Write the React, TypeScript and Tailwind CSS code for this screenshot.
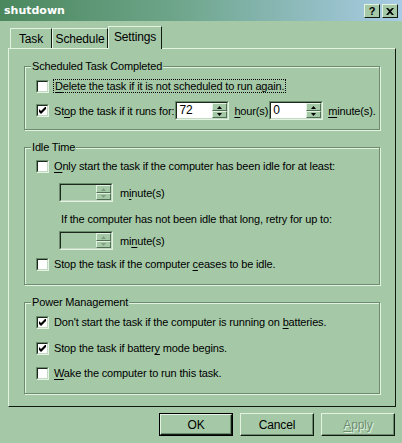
import React from 'react';

const HI = 'border-t-[#e2f3e2] border-l-[#e2f3e2]';

function U({ children }: { children: React.ReactNode }) {
  return <span className="underline underline-offset-[2px] decoration-[1px]">{children}</span>;
}

function Check({ checked }: { checked?: boolean }) {
  return (
    <div className="w-[13px] h-[13px] shrink-0 border border-t-[#6b8d6e] border-l-[#6b8d6e] border-b-[#e2f3e2] border-r-[#e2f3e2]">
      <div className="w-full h-full bg-white border border-t-[#1b291d] border-l-[#1b291d] border-b-[#c3d9c4] border-r-[#c3d9c4] flex items-center justify-center">
        {checked && (
          <svg width="7" height="7" viewBox="0 0 7 7">
            <path d="M0 2 L2 4 L7 -1 L7 2 L2 7 L0 5 Z" fill="#000" />
          </svg>
        )}
      </div>
    </div>
  );
}

function SpinBtn({ up, disabled, h }: { up?: boolean; disabled?: boolean; h: string }) {
  return (
    <div className={`${h} w-full flex items-center justify-center bg-[#a5c9a7] border ${HI} border-b-[#4f6e52] border-r-[#4f6e52]`}>
      <svg width="5" height="3" viewBox="0 0 5 3">
        {up ? (
          <path d="M2.5 0 L5 3 L0 3 Z" fill={disabled ? '#7f9f82' : '#000'} />
        ) : (
          <path d="M0 0 L5 0 L2.5 3 Z" fill={disabled ? '#7f9f82' : '#000'} />
        )}
      </svg>
    </div>
  );
}

function Spin({ value, disabled }: { value?: string; disabled?: boolean }) {
  return (
    <div className="flex h-[19px] w-[54px] shrink-0 border border-t-[#6b8d6e] border-l-[#6b8d6e] border-b-[#e2f3e2] border-r-[#e2f3e2]">
      <div
        className={`flex flex-1 border border-t-[#1b291d] border-l-[#1b291d] border-b-[#c3d9c4] border-r-[#c3d9c4] ${
          disabled ? 'bg-[#a5c9a7]' : 'bg-white'
        }`}
      >
        <div className="flex-1 pl-[2px] leading-[15px] text-[12px]">{value}</div>
        <div className="flex flex-col w-[15px]">
          <SpinBtn up disabled={disabled} h="h-[8px]" />
          <SpinBtn disabled={disabled} h="h-[7px]" />
        </div>
      </div>
    </div>
  );
}

function Group({ title, className, children }: { title: string; className: string; children: React.ReactNode }) {
  return (
    <div className={`relative border border-[#6b8d6e] shadow-[inset_1px_1px_0_#e2f3e2,1px_1px_0_#e2f3e2] ${className}`}>
      <div className="absolute left-[6px] -top-[8px] px-[1px] bg-[#a5c9a7] leading-[14px]">{title}</div>
      {children}
    </div>
  );
}

function Row({ checked, children, className }: { checked?: boolean; children: React.ReactNode; className?: string }) {
  return (
    <div className={`flex items-center h-[18px] pl-[11px] ${className ?? ''}`}>
      <Check checked={checked} />
      <div className="ml-[5px] whitespace-nowrap">{children}</div>
    </div>
  );
}

function Btn({ children, def, className }: { children: React.ReactNode; def?: boolean; className?: string }) {
  return (
    <div className={`w-[74px] h-[23px] ${def ? 'border border-black' : ''}`}>
      <div
        className={`w-full h-full flex items-center justify-center border ${HI} border-b-[#101a11] border-r-[#101a11] shadow-[inset_-1px_-1px_0_#6b8d6e] ${className ?? ''}`}
      >
        {children}
      </div>
    </div>
  );
}

export default function App() {
  return (
    <div
      className="w-[402px] h-[443px] bg-[#a5c9a7] overflow-hidden text-[11px] text-black tracking-[-0.15px] leading-[14px]"
      style={{ fontFamily: '"Liberation Sans", Arial, sans-serif' }}
    >
      {/* Title bar */}
      <div className="h-[21px] flex items-center justify-between pl-[4px] pr-[4px] bg-[linear-gradient(90deg,#4a875d_0%,#6fa68c_45%,#a8cce5_100%)]">
        <span
          className="text-white font-bold text-[11px] tracking-normal"
          style={{ fontFamily: '"DejaVu Sans", Verdana, sans-serif' }}
        >
          shutdown
        </span>
        <div className="flex gap-[2px] mt-[1px]">
          <div className={`w-[16px] h-[14px] flex items-center justify-center bg-[#a5c9a7] border ${HI} border-b-[#101a11] border-r-[#101a11] font-bold text-[11px] leading-none`}>
            ?
          </div>
          <div className={`w-[16px] h-[14px] flex items-center justify-center bg-[#a5c9a7] border ${HI} border-b-[#101a11] border-r-[#101a11]`}>
            <svg width="8" height="7" viewBox="0 0 8 7">
              <path d="M0 0 L2 0 L4 2 L6 0 L8 0 L5 3.5 L8 7 L6 7 L4 5 L2 7 L0 7 L3 3.5 Z" fill="#000" />
            </svg>
          </div>
        </div>
      </div>

      {/* Tabs */}
      <div className="flex items-end h-[27px] pl-[8px]">
        <div className="flex items-end">
          <div className="ml-[2px] w-[42px] h-[20px] flex items-center justify-center border border-b-0 border-t-[#e2f3e2] border-l-[#e2f3e2] border-r-[#101a11] text-[12px]">
            Task
          </div>
          <div className="w-[56px] h-[20px] flex items-center justify-center border border-b-0 border-t-[#e2f3e2] border-l-[#e2f3e2] border-r-[#101a11] text-[12px]">
            Schedule
          </div>
          <div className="relative z-10 -mb-[1px] w-[54px] h-[23px] flex items-start pt-[3px] justify-center bg-[#a5c9a7] border border-b-0 border-t-[#e2f3e2] border-l-[#e2f3e2] border-r-[#101a11] text-[12px]">
            Settings
          </div>
        </div>
      </div>

      {/* Panel */}
      <div className="ml-[8px] w-[388px] h-[359px] border border-t-[#e2f3e2] border-l-[#e2f3e2] border-r-[#101a11] border-b-[#101a11] pt-[17px] px-[15px]">
        <Group title="Scheduled Task Completed" className="h-[64px] pt-[10px]">
          <Row>
            <span className="outline outline-1 outline-dotted outline-black px-[1px]">
              <U>D</U>elete the task if it is not scheduled to run again.
            </span>
          </Row>
          <div className="flex items-center h-[19px] pl-[11px] mt-[6px] whitespace-nowrap">
            <Check checked />
            <span className="ml-[5px]">
              St<U>o</U>p the task if it runs for:
            </span>
            <div className="ml-[1px]">
              <Spin value="72" />
            </div>
            <span className="ml-[5px]">
              <U>h</U>our(s)
            </span>
            <div className="ml-[1px]">
              <Spin value="0" />
            </div>
            <span className="ml-[5px]">
              <U>m</U>inute(s).
            </span>
          </div>
        </Group>

        <Group title="Idle Time" className="h-[138px] mt-[17px] pt-[9px]">
          <Row>
            <U>O</U>nly start the task if the computer has been idle for at least:
          </Row>
          <div className="flex items-center h-[19px] pl-[34px] mt-[8px]">
            <Spin disabled />
            <span className="ml-[7px]">
              m<U>i</U>nute(s)
            </span>
          </div>
          <div className="h-[16px] flex items-center pl-[36px] mt-[9px] whitespace-nowrap">
            If the computer has not been idle that long, retry for up to:
          </div>
          <div className="flex items-center h-[19px] pl-[34px] mt-[4px]">
            <Spin disabled />
            <span className="ml-[7px]">
              mi<U>n</U>ute(s)
            </span>
          </div>
          <Row className="mt-[5px]">
            Stop the task if the computer <U>c</U>eases to be idle.
          </Row>
        </Group>

        <Group title="Power Management" className="h-[92px] mt-[17px] pt-[10px]">
          <Row checked>
            Don't start the task if the computer is running on <U>b</U>atteries.
          </Row>
          <Row checked className="mt-[8px]">
            Stop the task if batter<U>y</U> mode begins.
          </Row>
          <Row className="mt-[7px]">
            <U>W</U>ake the computer to run this task.
          </Row>
        </Group>
      </div>

      {/* Buttons */}
      <div className="flex justify-end gap-[7px] pr-[7px] mt-[6px] text-[12px]">
        <Btn def>OK</Btn>
        <Btn>Cancel</Btn>
        <Btn className="text-[#6f8f72] [text-shadow:1px_1px_0_#e2f3e2]">
          <U>A</U>pply
        </Btn>
      </div>
    </div>
  );
}
